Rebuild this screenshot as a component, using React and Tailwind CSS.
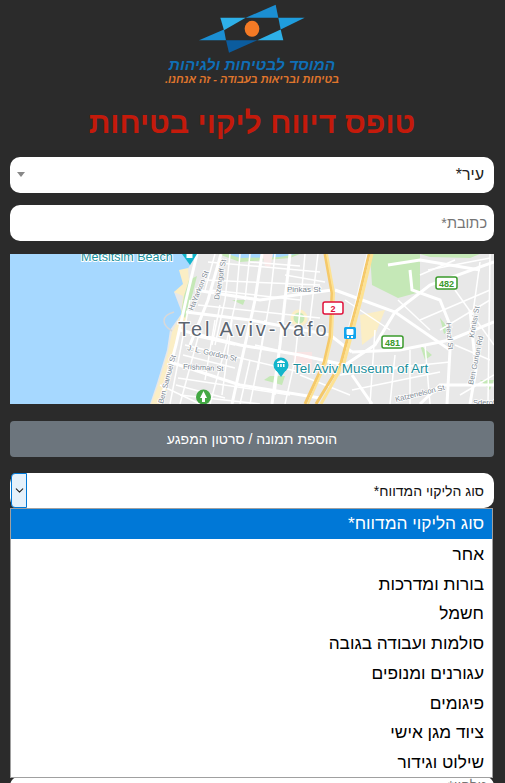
import { ChevronDown } from "lucide-react";

const font = { fontFamily: '"Liberation Sans", Arial, sans-serif' };

const options = [
  "אחר",
  "בורות ומדרכות",
  "חשמל",
  "סולמות ועבודה בגובה",
  "עגורנים ומנופים",
  "פיגומים",
  "ציוד מגן אישי",
  "שילוט וגידור",
];

// main streets, in page coordinates (the map's viewBox starts at 10,254)
const bigStreets = [
  "M197 254 L186 300 L176 345 L160 404",
  "M221 254 L208 300 L190 345",
  "M186 312 L250 320 L330 335 L352 352",
  "M195 290 L260 300 L332 290",
  "M170 362 L240 385 L320 398",
  "M180 330 L240 345 L300 355 L345 365",
  "M335 290 L395 312 L450 350 L447 404",
  "M345 365 L375 345 L395 312 L430 285 L494 262",
  "M352 352 L400 350 L450 340 L494 322",
  "M388 265 L420 260 L480 270",
  "M262 254 L255 300 L245 345 L232 404",
  "M290 254 L285 300 L280 345 L272 404",
  "M420 404 L440 385 L494 385",
  "M352 375 L372 404",
  "M470 310 L476 370 L470 404",
  "M410 270 L412 290 L440 300 L450 325",
];

const smallStreets = [
  "M208 262 L320 272", "M205 280 L320 285", "M230 254 L225 300 L215 345",
  "M240 254 L236 300 L226 345 L210 404", "M275 254 L270 300 L262 345 L250 404",
  "M305 254 L300 310 L295 360 L285 404", "M198 305 L320 318", "M185 345 L300 372",
  "M178 378 L290 395", "M190 300 L170 404", "M200 330 L180 404", "M250 360 L240 404",
  "M215 254 L205 290", "M250 254 L245 300", "M318 254 L310 320", "M180 395 L260 404",
  "M345 300 L390 330", "M375 330 L370 404", "M395 355 L390 404", "M410 350 L410 404",
  "M425 345 L430 404", "M352 390 L440 372", "M372 370 L450 362", "M420 320 L490 290",
  "M440 330 L490 300", "M455 290 L494 345", "M480 262 L472 320", "M428 270 L490 258",
  "M490 254 L488 404", "M455 345 L490 360", "M460 395 L494 375", "M220 305 L212 345",
  "M285 275 L325 282", "M265 320 L258 370", "M160 385 L200 404", "M300 375 L350 395",
  "M215 320 L205 380", "M232 320 L222 395", "M190 335 L235 345", "M183 355 L235 368",
  "M176 385 L225 398", "M250 262 L300 266", "M210 290 L300 300", "M282 320 L275 395",
  "M255 345 L320 360", "M340 375 L400 368", "M398 300 L430 330", "M420 275 L455 260",
];

const streetLabel = { fontSize: 7.5, fill: "#7c8791", stroke: "#ffffff", strokeWidth: 1.5, paintOrder: "stroke" };

function MapView() {
  return (
    <svg viewBox="10 254 484 150" className="block h-[150px] w-full [direction:ltr]" style={font}>
      <rect x="10" y="254" width="484" height="150" fill="#e8e8e8" />
      <path d="M370 254 L420 254 L420 292 L398 298 L372 285 Z" fill="#c5e8b7" />
      <path d="M218 254 L300 254 L290 258 L240 262 Z" fill="#c5e8b7" />
      <path d="M228 254 L296 254 L280 257 L240 258 Z" fill="#a6d8ff" />
      <path d="M420 254 L480 254 L470 258 L430 257 Z" fill="#c5e8b7" />
      <path d="M10 254 L197 254 L187 270 L185 287 L174 292 L182 313 L170 330 L167 350 L157 383 L150 404 L10 404 Z" fill="#a6d8ff" />
      <path d="M188 268 L179 270 L183 284 L174 292 L183 296 L181 315 L172 332 L168 352 L158 385 L151 404 L163 404 L170 378 L177 340 L186 320 L190 295 Z" fill="#fbeec5" />
      <path d="M189 280 L197 276 L192 296 L185 318 L181 314 L184 296 Z" fill="#c5e8b7" />
      <path d="M174 312 C 160 316 162 325 172 331" fill="none" stroke="#d8d8d8" strokeWidth="1.5" />
      <path d="M262 254 L273 254 L270 268 L265 266 Z" fill="#f8e8e8" />
      <circle cx="299" cy="318" r="7" fill="#c5e8b7" stroke="#fbeec5" strokeWidth="3" />
      <path d="M293 352 L312 352 L312 372 L295 372 Z" fill="#f8e4e4" />
      <path d="M270 376 L285 376 L282 385 L264 380 Z M232 300 L245 300 L243 305 Z M420 345 L432 355 L425 360 Z M440 318 L450 330 L444 334 Z M480 380 L494 380 L490 390 Z" fill="#c5e8b7" />
      <path d="M360 315 L385 310 L375 335 L362 345 Z" fill="#fbeec5" />
      {smallStreets.map((d) => (
        <path key={d} d={d} fill="none" stroke="#ffffff" strokeWidth="1.5" />
      ))}
      {bigStreets.map((d) => (
        <path key={d} d={d} fill="none" stroke="#ffffff" strokeWidth="3" />
      ))}
      <path d="M325 254 L332 293 L330 337 L324 363 L305 404" fill="none" stroke="#f5c96a" strokeWidth="3" />
      <path d="M327 254 L334 293 L332 337 L326 363 L308 404" fill="none" stroke="#fde293" strokeWidth="2" />
      <path d="M369 254 L358 300 L348 337 L341 363 L316 404" fill="none" stroke="#f5c96a" strokeWidth="3" />
      <path d="M372 254 L361 300 L351 337 L344 363 L321 404" fill="none" stroke="#fde293" strokeWidth="3" />
      <path d="M367 254 L356 300 L346 337" fill="none" stroke="#ffffff" strokeWidth="0.8" />

      <text x="81" y="261" fontSize="12.5" fill="#1a8f9c" stroke="#ffffff" strokeWidth="2" paintOrder="stroke">Metsitsim Beach</text>
      <text x="178" y="336" fontSize="20" letterSpacing="2.9" fill="#5b6570" stroke="#ffffff" strokeWidth="2" paintOrder="stroke">Tel Aviv-Yafo</text>
      <text x="293" y="373" fontSize="13.4" fill="#1a8f9c" stroke="#ffffff" strokeWidth="2" paintOrder="stroke">Tel Aviv Museum of Art</text>
      <text x="287" y="292" {...streetLabel} fontSize="8">Pinkas St</text>
      <text x="187" y="350" {...streetLabel} transform="rotate(13 187 350)">J. L. Gordon St</text>
      <text x="183" y="369" {...streetLabel} transform="rotate(3 183 369)">Frishman St</text>
      <text x="193" y="311" {...streetLabel} transform="rotate(-68 193 311)">HaYarkon St</text>
      <text x="219" y="300" {...streetLabel} transform="rotate(-80 219 300)">Dizengoff St</text>
      <text x="163" y="404" {...streetLabel} transform="rotate(-75 163 404)">Ben Samuel St</text>
      <text x="446" y="323" {...streetLabel} transform="rotate(85 446 323)">Herzl St</text>
      <text x="474" y="338" {...streetLabel} transform="rotate(-80 474 338)">Krinitsi St</text>
      <text x="473" y="385" {...streetLabel} transform="rotate(-78 473 385)">Ben Gurion Rd</text>
      <text x="396" y="402" {...streetLabel} transform="rotate(-14 396 402)">Katzenelson St</text>
      <text x="473" y="405" {...streetLabel}>Sderot</text>

      {/* beach pin */}
      <path d="M182 254 H197 L190 265 Z" fill="#12b5cb" />
      <rect x="186.5" y="254" width="6" height="4" fill="#ffffff" />
      {/* museum pin */}
      <circle cx="281" cy="365" r="7.5" fill="#12b5cb" />
      <path d="M276 370 L281 377 L286 370 Z" fill="#12b5cb" />
      <path d="M277 362 L281 360 L285 362 V363 H277 Z M277.5 364 H279 V367 H277.5 Z M280.2 364 H281.8 V367 H280.2 Z M283 364 H284.5 V367 H283 Z" fill="#ffffff" />
      {/* park pin */}
      <circle cx="203.5" cy="397" r="7.5" fill="#43a843" />
      <path d="M203.5 391 L207 398 H205 V402 H202 V398 H200 Z" fill="#ffffff" />
      {/* train station */}
      <rect x="344" y="327" width="12" height="12" rx="1.5" fill="#12a5ee" />
      <rect x="346.5" y="329" width="7" height="6" rx="1" fill="#ffffff" />
      <path d="M347 336 H349 V338 H347 Z M351 336 H353 V338 H351 Z" fill="#ffffff" />
      {/* road shields */}
      <rect x="323" y="302" width="20" height="12" rx="2" fill="#ffffff" stroke="#e0103a" strokeWidth="1.5" />
      <text x="333" y="311.5" fontSize="9" fontWeight="700" textAnchor="middle" fill="#e0103a">2</text>
      <rect x="382" y="336" width="21" height="12" rx="2" fill="#ffffff" stroke="#3a9a2b" strokeWidth="1.5" />
      <text x="392.5" y="345.5" fontSize="9" fontWeight="700" textAnchor="middle" fill="#3a9a2b">481</text>
      <rect x="436" y="277" width="21" height="12" rx="2" fill="#ffffff" stroke="#3a9a2b" strokeWidth="1.5" />
      <text x="446.5" y="286.5" fontSize="9" fontWeight="700" textAnchor="middle" fill="#3a9a2b">482</text>
    </svg>
  );
}

function LogoMark() {
  return (
    <svg viewBox="0 0 735 170" className="block h-[57px] w-[245px]">
      <polygon points="271,53 347,53 282,90" fill="#2eb0e8" />
      <polygon points="347,53 437,14 445,53" fill="#1b8ed2" />
      <polygon points="445,53 524,53 452,88" fill="#1f9ddd" />
      <polygon points="382,120 452,88 460,120" fill="#2eb0e8" />
      <polygon points="207,120 282,88 288,120" fill="#1b8ed2" />
      <polygon points="288,120 382,120 297,158" fill="#0b5c9e" />
      <ellipse cx="366" cy="86" rx="22" ry="24" fill="#f47a25" />
    </svg>
  );
}

export default function App() {
  return (
    <div dir="rtl" style={font} className="relative h-[783px] overflow-hidden bg-[#2b2b2b] pr-[11px] pl-[10px]">
      {/* Logo */}
      <div className="flex flex-col items-center">
        <LogoMark />
        <div className="mt-[1px] text-[15.5px] leading-[14px] font-bold italic text-[#0f6fb6]">המוסד לבטיחות ולגיהות</div>
        <div className="mt-[2px] text-[11px] leading-[11px] font-bold italic text-[#e0762c]">בטיחות ובריאות בעבודה - זה אנחנו.</div>
      </div>

      <h1 className="mt-[16px] text-center text-[30.2px] leading-[44px] font-bold text-[#c41a0b]">טופס דיווח ליקוי בטיחות</h1>

      {/* City */}
      <div className="mt-[12px] flex h-9 items-center justify-between rounded-[10px] bg-white pr-[10px] pl-[7px] text-base text-[#222]">
        <span>עיר*</span>
        <span className="mt-[-2px] h-0 w-0 border-x-[4px] border-t-[5px] border-x-transparent border-t-[#888]" />
      </div>

      {/* Address */}
      <input
        placeholder="כתובת*"
        className="mt-3 block h-9 w-full rounded-[10px] bg-white px-[7px] text-[14.5px] text-[#222] outline-none placeholder:text-[#757575]"
      />

      <div className="mt-[13px]">
        <MapView />
      </div>

      <button className="mt-[17px] block h-9 w-full rounded bg-[#6c757d] text-sm text-white">
        הוספת תמונה / סרטון המפגע
      </button>

      {/* Report type */}
      <div className="relative mt-4">
        <div className="flex h-[35px] items-center justify-between rounded-[10px] bg-white pr-[10px] text-sm text-[#111]">
          <span>סוג הליקוי המדווח*</span>
          <span className="ml-[1px] flex h-full w-[16px] items-center justify-center rounded-l-[4px] border border-[#0078d7] bg-[#e5f1fb]">
            <ChevronDown size={13} strokeWidth={2} className="text-[#222]" />
          </span>
        </div>
        <ul className="absolute top-[35px] right-[1px] left-0 z-10 border border-[#a0a0a0] bg-white text-[17.3px] text-black">
          <li className="flex h-[30px] items-center bg-[#0078d7] pr-[8px] text-white">סוג הליקוי המדווח*</li>
          {options.map((o) => (
            <li key={o} className="flex h-[29.75px] items-center pt-[2px] pr-[8px]">{o}</li>
          ))}
        </ul>
        <div className="mt-[268px] h-9 rounded-[10px] bg-white pr-[7px] text-[14.5px] text-[#757575]">טלפון*</div>
      </div>
    </div>
  );
}
